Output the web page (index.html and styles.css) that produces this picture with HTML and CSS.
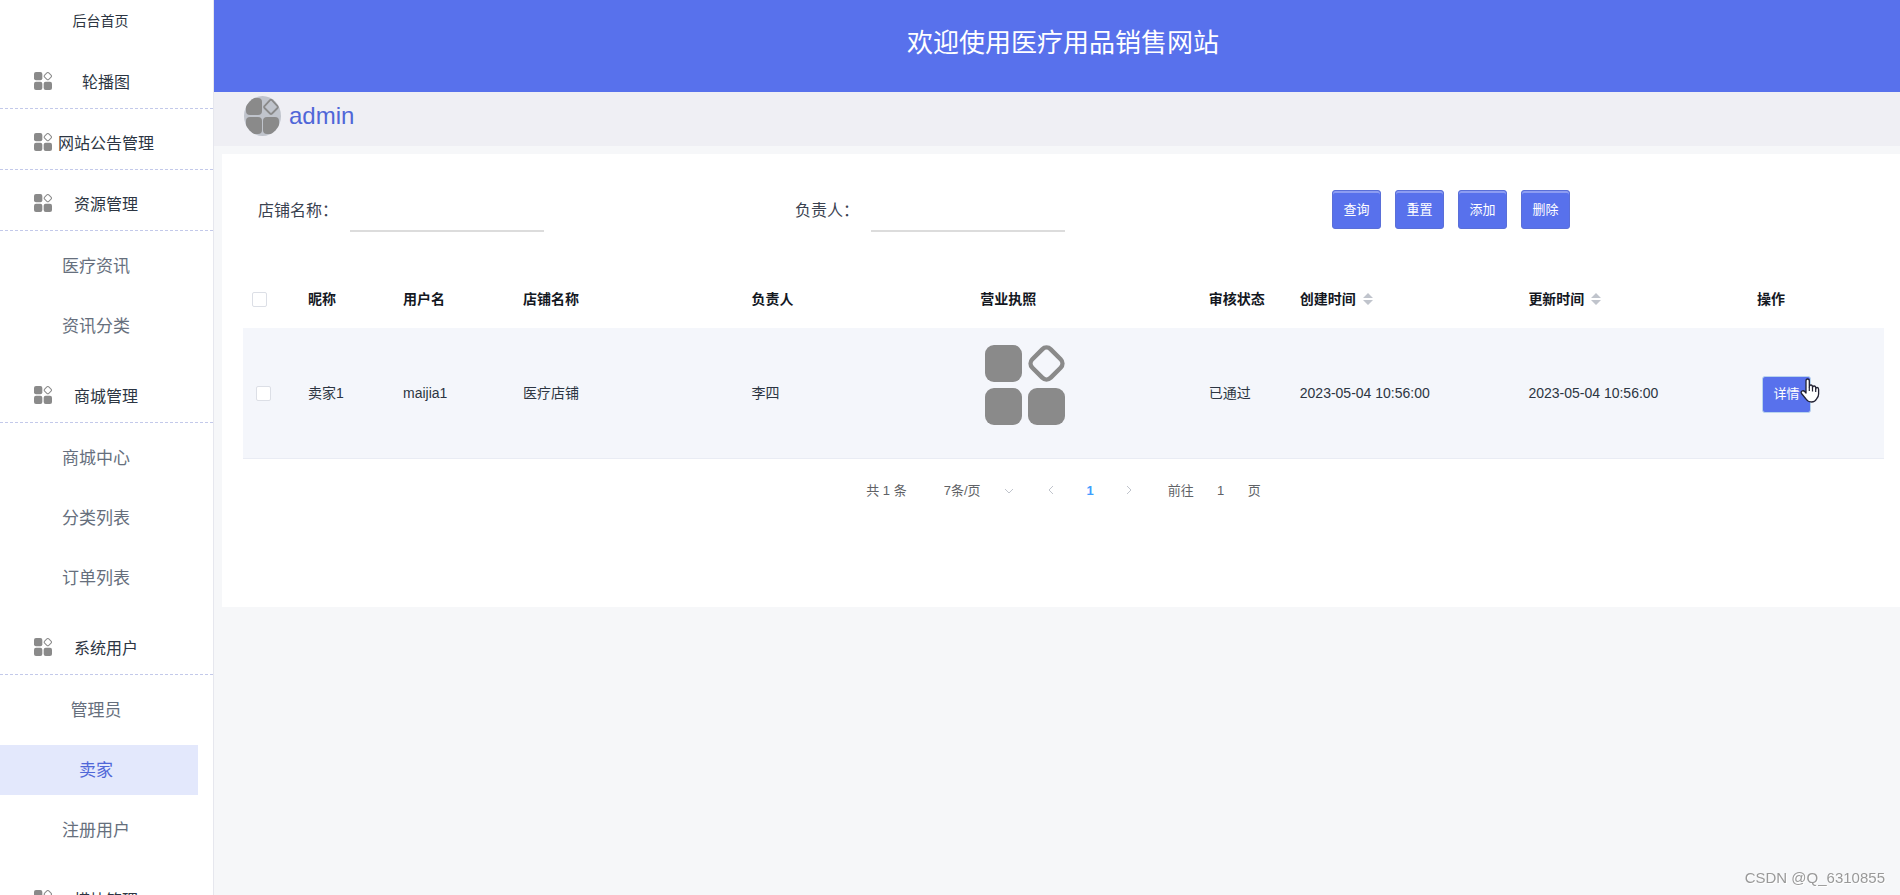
FILE: index.html
```html
<!DOCTYPE html>
<html lang="zh-CN">
<head>
<meta charset="utf-8">
<title>医疗用品销售网站</title>
<link rel="stylesheet" href="styles.css">
</head>
<body>
<svg class="symbols" aria-hidden="true">
  <symbol id="grid" viewBox="0 0 80 80">
    <rect x="0" y="0" width="37" height="37" rx="9" fill="#8a8a8a"/>
    <rect x="0" y="43" width="37" height="37" rx="9" fill="#8a8a8a"/>
    <rect x="43" y="43" width="37" height="37" rx="9" fill="#8a8a8a"/>
    <rect x="48.500" y="5.500" width="26" height="26" rx="6" transform="rotate(45 61.5 18.5)" fill="none" stroke="#8a8a8a" stroke-width="4.500"/>
  </symbol>
</svg>
<div class="app">
  <nav class="sidebar">
    <a class="home" href="#">后台首页</a>
    <div class="group-title"><svg class="icon"><use href="#grid"/></svg><span>轮播图</span></div>
    <div class="group-title"><svg class="icon"><use href="#grid"/></svg><span>网站公告管理</span></div>
    <div class="group-title"><svg class="icon"><use href="#grid"/></svg><span>资源管理</span></div>
    <div class="submenu">
      <a href="#">医疗资讯</a>
      <a href="#">资讯分类</a>
    </div>
    <div class="group-title"><svg class="icon"><use href="#grid"/></svg><span>商城管理</span></div>
    <div class="submenu">
      <a href="#">商城中心</a>
      <a href="#">分类列表</a>
      <a href="#">订单列表</a>
    </div>
    <div class="group-title"><svg class="icon"><use href="#grid"/></svg><span>系统用户</span></div>
    <div class="submenu">
      <a href="#">管理员</a>
      <a href="#" class="active">卖家</a>
      <a href="#">注册用户</a>
    </div>
    <div class="group-title"><svg class="icon"><use href="#grid"/></svg><span>模块管理</span></div>
  </nav>
  <div class="main">
    <header class="banner"><h1>欢迎使用医疗用品销售网站</h1></header>
    <div class="userbar">
      <svg class="avatar" viewBox="0 0 37 40" preserveAspectRatio="none">
        <defs><clipPath id="round"><ellipse cx="18.500" cy="20" rx="18.500" ry="20"/></clipPath></defs>
        <g clip-path="url(#round)">
          <rect width="37" height="40" fill="#c0c4cc"/>
          <g fill="#8a8a8a">
            <rect x="2" y="2" width="16" height="17" rx="4"/>
            <rect x="2" y="21" width="16" height="17" rx="4"/>
            <rect x="19" y="21" width="16" height="17" rx="4"/>
          </g>
          <path d="M26 4.200Q27 3.200 28 4.200L33.500 10Q34.500 11 33.500 12L28 17.500Q27 18.500 26 17.500L20.500 12Q19.500 11 20.500 10Z" fill="none" stroke="#8a8a8a" stroke-width="1.800"/>
        </g>
      </svg>
      <span>admin</span>
    </div>
    <main class="panel">
      <form class="search">
        <div class="field"><label for="shop">店铺名称：</label><input id="shop" type="text"></div>
        <div class="field"><label for="owner">负责人：</label><input id="owner" type="text"></div>
        <div class="actions">
          <button type="button" class="btn">查询</button>
          <button type="button" class="btn">重置</button>
          <button type="button" class="btn">添加</button>
          <button type="button" class="btn">删除</button>
        </div>
      </form>
      <table class="list">
        <colgroup>
          <col class="c-check"><col class="c-nick"><col class="c-user"><col><col><col><col class="c-state"><col><col><col class="c-op">
        </colgroup>
        <thead>
          <tr>
            <th class="check-head"><input type="checkbox" aria-label="全选"></th>
            <th>昵称</th><th>用户名</th><th>店铺名称</th><th>负责人</th><th>营业执照</th><th>审核状态</th>
            <th>创建时间<svg class="sort" viewBox="0 0 10 12"><path d="M5 0L10 5H0ZM5 12L10 7H0Z" fill="#c0c4cc"/></svg></th>
            <th>更新时间<svg class="sort" viewBox="0 0 10 12"><path d="M5 0L10 5H0ZM5 12L10 7H0Z" fill="#c0c4cc"/></svg></th>
            <th>操作</th>
          </tr>
        </thead>
        <tbody>
          <tr>
            <td class="check-cell"><input type="checkbox" aria-label="选择 卖家1"></td>
            <td>卖家1</td><td>maijia1</td><td>医疗店铺</td><td>李四</td>
            <td class="license"><svg viewBox="-5 -5 90 90"><use href="#grid" width="80" height="80"/></svg></td>
            <td>已通过</td><td>2023-05-04 10:56:00</td><td>2023-05-04 10:56:00</td>
            <td>
              <div class="op">
                <button type="button" class="btn detail">详情</button>
                <svg class="pointer" viewBox="0 0 20 25"><path d="M6 15V3Q6 1 7.700 1Q9.300 1 9.300 3V9Q9.300 7 10.900 7Q12.500 7 12.500 9V10Q12.500 8 14.100 8Q15.700 8 15.700 10V11Q15.800 9.500 17.200 9.500Q18.600 9.500 18.600 11.500V16Q18.600 19 16.500 21Q15 24 11.500 24Q8 24 6 21L1.500 15.500Q.6 14 2 13Q3.500 12.300 4.700 13.500Z" fill="#fff" stroke="#223" stroke-width="1.300" stroke-linejoin="round"/><path d="M9.300 9V13M12.500 10V13.500M15.700 11V14" stroke="#223" stroke-width="1.200" fill="none"/></svg>
              </div>
            </td>
          </tr>
        </tbody>
      </table>
      <div class="pager">
        <span class="total">共 1 条</span>
        <span class="size">
          <select aria-label="每页条数"><option>7条/页</option></select>
          <svg class="chev" viewBox="0 0 10 10"><path d="M1 3L5 7L9 3" /></svg>
        </span>
        <button type="button" class="page-btn" aria-label="上一页"><svg class="chev" viewBox="0 0 10 10"><path d="M7 1L3 5L7 9"/></svg></button>
        <button type="button" class="page-btn current">1</button>
        <button type="button" class="page-btn" aria-label="下一页"><svg class="chev" viewBox="0 0 10 10"><path d="M3 1L7 5L3 9"/></svg></button>
        <label class="jump" for="page">前往</label><input id="page" class="page-input" type="text" value="1"><span>页</span>
      </div>
    </main>
  </div>
</div>
<div class="watermark">CSDN @Q_6310855</div>
</body>
</html>
```
FILE: styles.css
```css
* { box-sizing: border-box; }
body {
  margin: 0;
  background: #f6f7f9;
  color: #2c3542;
  font: 14px/20px "Liberation Sans", "Noto Sans CJK SC", sans-serif;
}
a { color: inherit; text-decoration: none; }
button, input, select { font: inherit; color: inherit; }
.symbols { display: none; }
.app { display: flex; height: 100vh; overflow: hidden; }

.sidebar {
  flex: none;
  width: 214px;
  overflow: hidden;
  background: #fff;
  border-right: 1px solid #e6e7ee;
}
.home { display: block; height: 48px; padding: 11px 12px 0 0; text-align: center; }
.group-title {
  display: flex;
  align-items: center;
  gap: 6px;
  height: 61px;
  padding: 10px 0 0 34px;
  border-bottom: 1px dashed #c3c9ea;
  font-size: 16px;
}
.group-title .icon { width: 18px; height: 18px; margin-bottom: 4px; }
.group-title span { width: 96px; text-align: center; white-space: nowrap; }
.submenu { display: flex; flex-direction: column; gap: 10px; padding: 10px 0 11px; margin-right: 15px; }
.submenu a {
  height: 50px;
  padding-right: 6px;
  font-size: 17px;
  line-height: 52px;
  text-align: center;
  color: #666f7d;
}
.submenu .active { background: #e3e8fc; color: #5067d8; }

.main { flex: 1; min-width: 0; }
.banner { height: 92px; padding: 23px 0 0 12px; background: #5871ec; color: #fff; text-align: center; }
.banner h1 { margin: 0; font-size: 26px; font-weight: 400; line-height: 40px; }
.userbar {
  display: flex;
  align-items: center;
  gap: 8px;
  height: 54px;
  padding: 0 0 6px 30px;
  background: #efeff4;
  color: #4f66d8;
  font-size: 24px;
}
.avatar { width: 37px; height: 40px; }

.panel { margin: 8px 0 0 8px; padding: 36px 16px 102px 21px; background: #fff; }
.search { display: grid; grid-template-columns: repeat(3, 1fr); padding: 0 15px; }
.field { display: flex; gap: 12px; font-size: 16px; line-height: 42px; color: #3a4250; }
.field input { width: 194px; height: 42px; padding: 0 10px; border: 0; border-bottom: 2px solid #dcdcdc; background: none; }
.actions { display: flex; gap: 14px; }
.btn {
  width: 49px;
  height: 39px;
  padding: 0;
  border: 1px solid #5a6fd8;
  border-radius: 3px;
  background: #5871ec;
  box-shadow: inset 0 2px 0 #8d9df2;
  color: #fff;
  font-size: 13px;
}

.list { width: 100%; margin-top: 38px; border-collapse: separate; border-spacing: 0; table-layout: fixed; }
.c-check { width: 55px; }
.c-nick { width: 95px; }
.c-user { width: 120px; }
.c-state { width: 91px; }
.c-op { width: 137px; }
.list th, .list td { padding: 0 10px; text-align: left; white-space: nowrap; }
.list th { height: 58px; color: #14181f; font-weight: 700; }
.list td { height: 131px; background: #f4f6fb; border-bottom: 1px solid #e9ecf4; }
.list input {
  display: block;
  appearance: none;
  width: 15px;
  height: 15px;
  margin: 0;
  border: 1px solid #dcdfe6;
  border-radius: 2px;
  background: #fff;
}
.list .check-head { padding: 0 9px; }
.list .check-cell { padding: 0 13px; }
.list .license { padding-top: 12px; vertical-align: top; }
.license svg { display: block; width: 90px; height: 90px; }
.sort { width: 10px; height: 12px; margin-left: 7px; vertical-align: -1px; }
.op { position: relative; padding: 2px 0 0 5px; }
.detail { height: 37px; border-color: #b9d4ee; box-shadow: none; }
.pointer { position: absolute; left: 43px; top: 4px; width: 20px; height: 25px; }

.pager { display: flex; align-items: center; justify-content: center; height: 28px; margin-top: 18px; font-size: 13px; color: #606266; }
.size { display: flex; align-items: center; margin-left: 37px; }
.size select { appearance: none; width: 60px; padding: 0; border: 0; background: none; }
.chev { width: 10px; height: 10px; fill: none; stroke: #c0c4cc; }
.page-btn { width: 39px; padding: 0; border: 0; background: none; }
.size + .page-btn { margin-left: 18px; }
.current { color: #409eff; font-weight: 700; }
.jump { margin-left: 19px; }
.page-input { width: 54px; padding: 0; border: 0; background: none; text-align: center; }

.watermark {
  position: fixed;
  right: 15px;
  bottom: 7px;
  font-size: 15px;
  color: #999;
  text-shadow: 1px 1px 0 #fff;
}
```
